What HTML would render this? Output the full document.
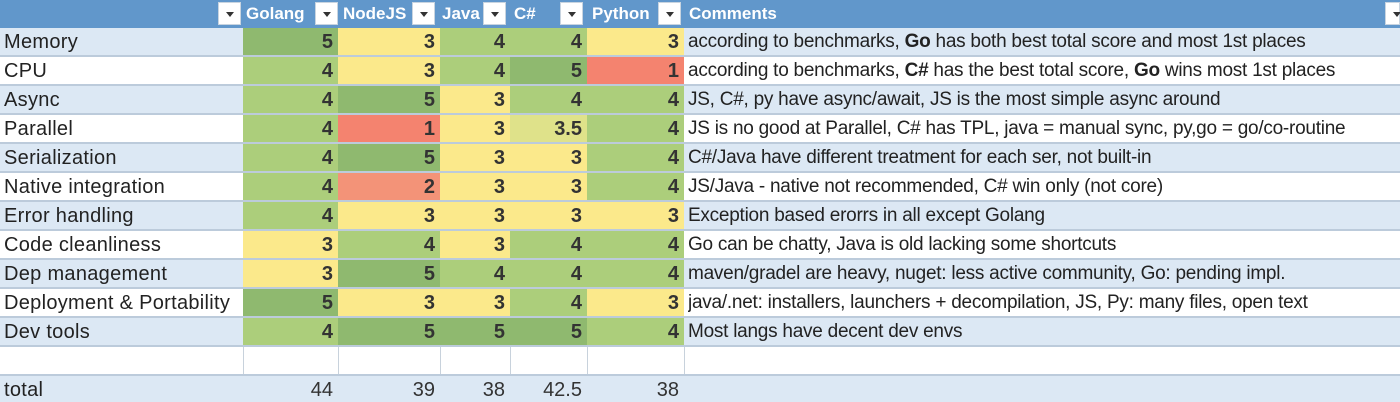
<!DOCTYPE html>
<html><head><meta charset="utf-8"><style>
*{margin:0;padding:0;box-sizing:border-box}
body{width:1400px;height:402px;overflow:hidden;background:#fff;font-family:"Liberation Sans",sans-serif;font-size:19px;color:#222}
.r{position:absolute;left:0;width:1400px;border-bottom:2px solid #bccbdb}
.c{position:absolute;top:0;bottom:0;line-height:28px;white-space:nowrap;overflow:hidden}
.n{text-align:right;padding-right:5px;font-weight:bold;color:#333;font-size:20px}
.hd{background:#6197cb;color:#fff;font-weight:bold;font-size:17px;line-height:27px}
.fb{position:absolute;top:2px;width:23px;height:23px;background:#fff;border:1px solid #c8d4e0}
.fb:after{content:"";position:absolute;left:7px;top:9px;border-left:4px solid transparent;border-right:4px solid transparent;border-top:5px solid #333}
.b{background:#dce8f4}.w{background:#fff}
.g5{background:#8fb96f}.g4{background:#acce7b}.y3{background:#fbe98b}.rd{background:#f4836f}.r2{background:#f39378}.y35{background:#dfe28a}
.cm{letter-spacing:-0.25px}
.lb{font-size:20px;letter-spacing:0.3px}
</style></head><body>
<div class="r hd" style="top:0;height:28px;border:none">
<div class="fb" style="left:218px"></div><div class="c" style="left:246px">Golang</div>
<div class="fb" style="left:315px"></div><div class="c" style="left:343px">NodeJS</div>
<div class="fb" style="left:412px"></div><div class="c" style="left:442px">Java</div>
<div class="fb" style="left:483px"></div><div class="c" style="left:514px">C#</div>
<div class="fb" style="left:560px"></div><div class="c" style="left:592px">Python</div>
<div class="fb" style="left:658px"></div><div class="c" style="left:689px">Comments</div>
<div class="fb" style="left:1385px;width:15px"></div>
</div>
<div id="rows"></div>
<script>
var L=[243,338,440,510,587,684],Wd=[95,102,70,77,97];
var d=[
["Memory",[5,3,4,4,3],"according to benchmarks, <b>Go</b> has both best total score and most 1st places"],
["CPU",[4,3,4,5,1],"according to benchmarks, <b>C#</b> has the best total score, <b>Go</b> wins most 1st places"],
["Async",[4,5,3,4,4],"JS, C#, py have async/await, JS is the most simple async around"],
["Parallel",[4,1,3,3.5,4],"JS is no good at Parallel, C# has TPL, java = manual sync, py,go = go/co-routine"],
["Serialization",[4,5,3,3,4],"C#/Java have different treatment for each ser, not built-in"],
["Native integration",[4,2,3,3,4],"JS/Java - native not recommended, C# win only (not core)"],
["Error handling",[4,3,3,3,3],"Exception based erorrs in all except Golang"],
["Code cleanliness",[3,4,3,4,4],"Go can be chatty, Java is old lacking some shortcuts"],
["Dep management",[3,5,4,4,4],"maven/gradel are heavy, nuget: less active community, Go: pending impl."],
["Deployment &amp; Portability",[5,3,3,4,3],"java/.net: installers, launchers + decompilation, JS, Py: many files, open text"],
["Dev tools",[4,5,5,5,4],"Most langs have decent dev envs"]];
var h="",rh=29;
function cls(v){if(v==5)return"g5";if(v==4)return"g4";if(v==3)return"y3";if(v==3.5)return"y35";if(v==2)return"r2";return"rd";}
for(var i=0;i<d.length;i++){var t=28+i*rh,bg=i%2?"w":"b";
h+='<div class="r '+bg+'" style="top:'+t+'px;height:'+rh+'px"><div class="c lb" style="left:4px">'+d[i][0]+'</div>';
for(var j=0;j<5;j++)h+='<div class="c n '+cls(d[i][1][j])+'" style="left:'+L[j]+'px;width:'+Wd[j]+'px">'+d[i][1][j]+'</div>';
h+='<div class="c cm" style="left:688px">'+d[i][2]+'</div></div>';}
var t=28+11*rh;
h+='<div class="r w" style="top:'+t+'px;height:'+rh+'px">';
for(var j=0;j<6;j++)h+='<div class="c" style="left:'+L[j]+'px;border-left:1px solid #c8d2dc"></div>';
h+='</div>';
t+=rh;var tot=[44,39,38,42.5,38];
h+='<div class="r b" style="top:'+t+'px;height:'+(402-t)+'px;border:none"><div class="c lb" style="left:4px">total</div>';
for(var j=0;j<5;j++)h+='<div class="c n" style="font-weight:normal;left:'+L[j]+'px;width:'+Wd[j]+'px">'+tot[j]+'</div>';
h+='</div>';
document.getElementById("rows").innerHTML=h;
</script>
</body></html>
